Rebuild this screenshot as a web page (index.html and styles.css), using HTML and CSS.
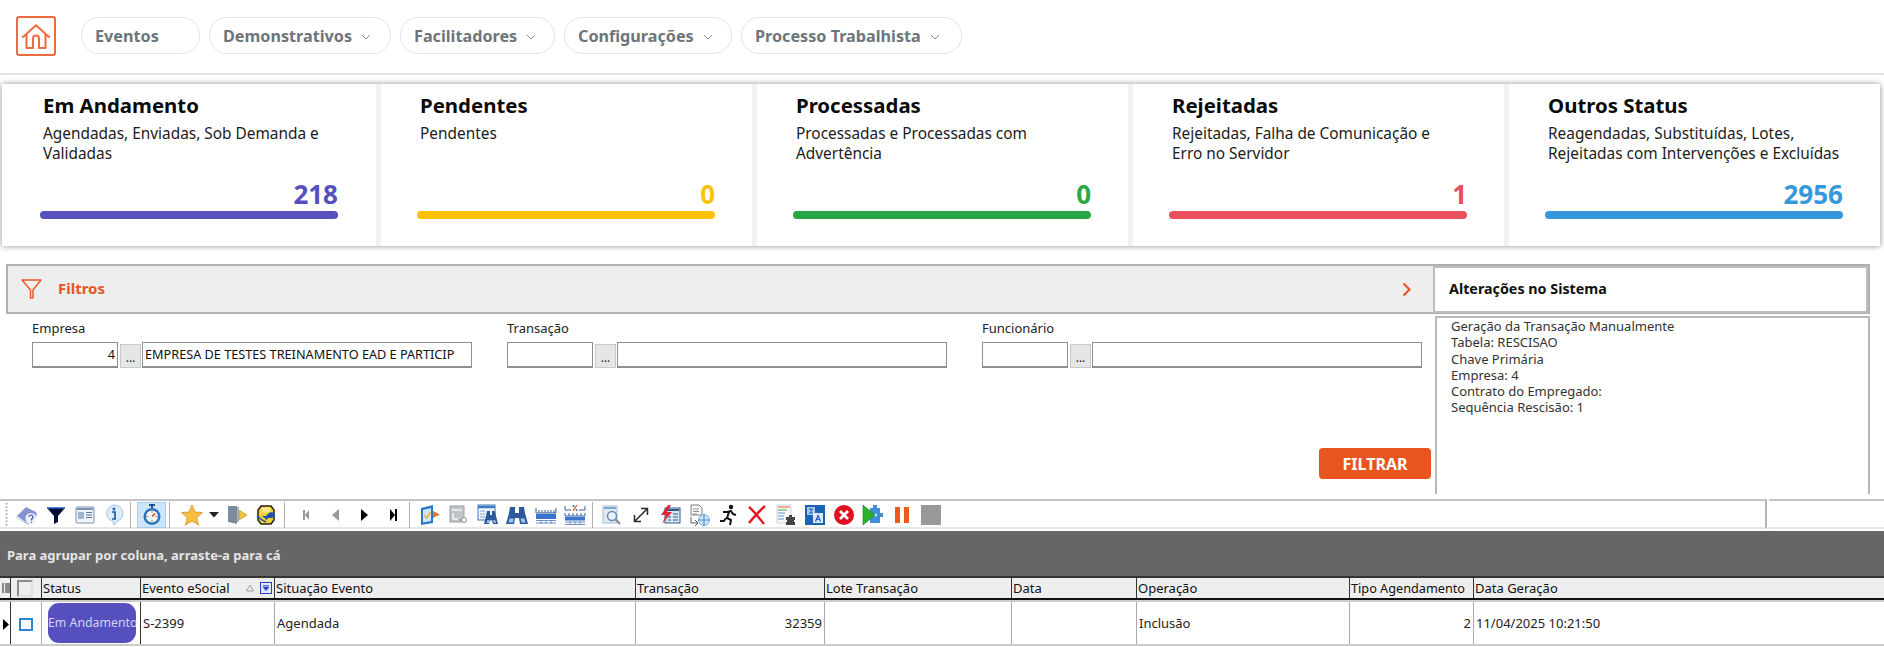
FILE: index.html
```html
<!DOCTYPE html>
<html lang="pt-BR">
<head>
<meta charset="utf-8">
<title>Painel eSocial</title>
<link rel="stylesheet" href="styles.css">
</head>
<body>
<header class="topbar">
  <a class="home"><svg viewBox="0 0 28 25" width="28" height="25"><path d="M1 13 14 1.2 27 13M4.5 10.5V24H11V14.5a3 3 0 0 1 6 0V24h6.5V10.5" fill="none" stroke="#ee6a3f" stroke-width="2" stroke-linejoin="round" stroke-linecap="round"/></svg></a>
  <nav class="menu">
    <span class="pill pill-eventos">Eventos</span>
    <span class="pill pill-demo">Demonstrativos<svg class="caret" viewBox="0 0 10 6"><path d="M1 1l4 4 4-4" fill="none" stroke="#8a8f96" stroke-width="1"/></svg></span>
    <span class="pill pill-fac">Facilitadores<svg class="caret" viewBox="0 0 10 6"><path d="M1 1l4 4 4-4" fill="none" stroke="#8a8f96" stroke-width="1"/></svg></span>
    <span class="pill pill-conf">Configurações<svg class="caret" viewBox="0 0 10 6"><path d="M1 1l4 4 4-4" fill="none" stroke="#8a8f96" stroke-width="1"/></svg></span>
    <span class="pill pill-proc">Processo Trabalhista<svg class="caret" viewBox="0 0 10 6"><path d="M1 1l4 4 4-4" fill="none" stroke="#8a8f96" stroke-width="1"/></svg></span>
  </nav>
</header>

<section class="cards">
  <article class="card">
    <h2>Em Andamento</h2>
    <p>Agendadas, Enviadas, Sob Demanda e<br>Validadas</p>
    <div class="count c-purple">218</div>
    <div class="bar b-purple"></div>
  </article>
  <article class="card">
    <h2>Pendentes</h2>
    <p>Pendentes</p>
    <div class="count c-yellow">0</div>
    <div class="bar b-yellow"></div>
  </article>
  <article class="card">
    <h2>Processadas</h2>
    <p>Processadas e Processadas com<br>Advertência</p>
    <div class="count c-green">0</div>
    <div class="bar b-green"></div>
  </article>
  <article class="card">
    <h2>Rejeitadas</h2>
    <p>Rejeitadas, Falha de Comunicação e<br>Erro no Servidor</p>
    <div class="count c-red">1</div>
    <div class="bar b-red"></div>
  </article>
  <article class="card">
    <h2>Outros Status</h2>
    <p>Reagendadas, Substituídas, Lotes,<br>Rejeitadas com Intervenções e Excluídas</p>
    <div class="count c-blue">2956</div>
    <div class="bar b-blue"></div>
  </article>
</section>

<section class="filters">
  <div class="f-left">
    <div class="f-head">
      <svg class="f-icon" viewBox="0 0 21 20" width="21" height="20"><path d="M1 1h19L12 11v8H9.500V11z" fill="none" stroke="#ee5a28" stroke-width="1.500" stroke-linejoin="round"/></svg>
      <span class="f-title">Filtros</span>
      <svg class="f-chev" viewBox="0 0 9 15" width="9" height="15"><path d="M1.500 1.500 7.500 7.500 1.500 13.500" fill="none" stroke="#e8551e" stroke-width="2.200"/></svg>
    </div>
    <div class="f-form">
      <div class="field">
        <label>Empresa</label>
        <div class="inputs"><span class="inp num">4</span><span class="dots">...</span><span class="inp wide">EMPRESA DE TESTES TREINAMENTO EAD E PARTICIP</span></div>
      </div>
      <div class="field">
        <label>Transação</label>
        <div class="inputs"><span class="inp num"></span><span class="dots">...</span><span class="inp wide"></span></div>
      </div>
      <div class="field">
        <label>Funcionário</label>
        <div class="inputs"><span class="inp num"></span><span class="dots">...</span><span class="inp wide"></span></div>
      </div>
    </div>
    <div class="f-actions"><button class="btn-filter">FILTRAR</button></div>
  </div>
  <aside class="f-right">
    <div class="alt-head"><div class="alt-title">Alterações no Sistema</div></div>
    <div class="alt-body">Geração da Transação Manualmente<br>Tabela: RESCISAO<br>Chave Primária<br>Empresa: 4<br>Contrato do Empregado:<br>Sequência Rescisão: 1</div>
  </aside>
</section>

<section class="toolbar-row">
  <div class="toolbar">
    <svg class="grip" viewBox="0 0 3 25" width="3" height="25"><path d="M1.500 1v23" stroke="#aaa" stroke-width="2" stroke-dasharray="1.500 2"/></svg>
    <span class="tb"><svg viewBox="0 0 22 22"><path d="M1 12 10 3l10 5c1 2 1 5-1 7l-7 5z" fill="#8494d2"/><path d="M1 12v2l11 6.500 7-4" fill="none" stroke="#c4cdea" stroke-width="1"/><circle cx="15" cy="14.500" r="5.500" fill="#eef1fb"/><path d="M13 13a2 2 0 1 1 2.500 2v1.500M15.500 18v1" fill="none" stroke="#4a60b0" stroke-width="1.300"/></svg></span>
    <span class="tb"><svg viewBox="0 0 22 22"><path d="M2 4h18l-7 8v6l-4 2v-8z" fill="#050a30"/><path d="M2 4h18" stroke="#1a57c0" stroke-width="1.500"/></svg></span>
    <span class="tb"><svg viewBox="0 0 22 22"><rect x="2" y="3" width="18" height="16" rx="1" fill="#eef3f8" stroke="#7a92b4"/><path d="M3 5h16" stroke="#7a92b4" stroke-width="2"/><path d="M4 8h6v7H4z" fill="#9fb4cf"/><path d="M12 8.500h6M12 11h6M12 13.500h6" stroke="#5b7a9f"/></svg></span>
    <span class="tb"><svg viewBox="0 0 22 22"><path d="M11 1a9 8.500 0 0 1 3 16.500L11 21l-1-3.500A9 8.500 0 0 1 11 1z" fill="#dcebf9" stroke="#a9c4e0"/><circle cx="11" cy="5" r="1.500" fill="#1e5fa8"/><path d="M9 8h3v7h1M9 15h4" stroke="#1e5fa8" stroke-width="1.700" fill="none"/></svg></span>
    <span class="sep s1"></span>
    <span class="tb tb-on"><svg viewBox="0 0 22 22"><path d="M8 1h6M11 1v3" stroke="#1c4f8f" stroke-width="2"/><circle cx="11" cy="12.500" r="8.500" fill="#2a74c0"/><circle cx="11" cy="12.500" r="6" fill="#f3f6f8"/><path d="M11 7v2M11 16v2M5.500 12.500h2M14.500 12.500h2" stroke="#e86a2a"/><path d="M11 12.500l3-3" stroke="#d13a1a" stroke-width="1.500"/></svg></span>
    <span class="sep s2"></span>
    <span class="tb"><svg viewBox="0 0 22 22"><path d="M11 1l3 7 7.500.6-5.700 5 1.800 7.400L11 17l-6.600 4 1.800-7.400-5.700-5L8 8z" fill="#f9bf3e" stroke="#d9902a" stroke-width=".8"/></svg></span>
    <span class="tb tb-narrow"><svg viewBox="0 0 10 6" class="tb-arrow"><path d="M0 0h10L5 5.500z" fill="#222"/></svg></span>
    <span class="tb"><svg viewBox="0 0 22 22"><path d="M2 2h9v18l-9-2z" fill="#7d8c9b"/><path d="M11 3h2v15h-2z" fill="#a8b4bf"/><path d="M13 6l8 5-8 5z" fill="#efc23a" stroke="#b0902a" stroke-width=".6"/></svg></span>
    <span class="tb"><svg viewBox="0 0 22 22"><path d="M6 2h10l3 4v10l-3 4H6l-3-4V6z" fill="#f3cf2f" stroke="#222" stroke-width="1.500"/><path d="M7 3.500h8v5H7z" fill="#f7e88f"/><path d="M20 9c-3-1-6-1-7 1l-2 2H7l5 4 1-2c2 0 5 0 7-1z" fill="#2050b0"/><path d="M2 12c3 3 6 5 9 6" stroke="#2050b0" stroke-width="1.500" fill="none"/></svg></span>
    <span class="sep s3"></span>
    <span class="tb"><svg viewBox="0 0 22 22"><path d="M8 6v10h2V6zM10 11l4-5v10z" fill="#9a9a9a"/></svg></span>
    <span class="tb"><svg viewBox="0 0 22 22"><path d="M15 5v12l-7-6z" fill="#9a9a9a"/></svg></span>
    <span class="tb"><svg viewBox="0 0 22 22"><path d="M8 5v12l7-6z" fill="#000"/></svg></span>
    <span class="tb"><svg viewBox="0 0 22 22"><path d="M8 5v12l5-6zM13 5h2v12h-2z" fill="#000"/></svg></span>
    <span class="sep s4"></span>
    <span class="tb"><svg viewBox="0 0 22 22"><path d="M2 4 14 1v18l-12 2z" fill="#2b7bc4"/><path d="M4 6l8-2v13l-8 1.500z" fill="#cfe6f7"/><path d="M5.500 11l2 3 4-6" stroke="#e7b531" stroke-width="1.500" fill="none"/><path d="M14 7l7 3.500-7 3.500z" fill="#e8732c"/></svg></span>
    <span class="tb"><svg viewBox="0 0 22 22"><rect x="2" y="2" width="14" height="16" fill="#bfc4c8" stroke="#9aa0a5"/><path d="M4 6h10" stroke="#f3f3f3" stroke-width="1.500"/><path d="M5 9v6h5" stroke="#f3f3f3" stroke-width="1.500" fill="none"/><circle cx="16" cy="16" r="2.500" fill="#fff" stroke="#8a9095"/><path d="M11 16h3" stroke="#8a9095"/></svg></span>
    <span class="tb"><svg viewBox="0 0 22 22"><rect x="1" y="1" width="17" height="15" fill="#f1f5fa" stroke="#3c79bd"/><path d="M1 3h17" stroke="#3c79bd" stroke-width="2.500"/><path d="M3 7h5M3 10h5M3 13h5" stroke="#8ca5c4"/><path d="M10 7h3v4h2V7h3l1 5 2 8h-5l-1-4h-2l-1 4H7l2-8z" fill="#2a5a9c"/><path d="M10.500 16h2l-.5 3H9.500zM16 16h2l1 3h-2z" fill="#a9c3e8"/></svg></span>
    <span class="tb"><svg viewBox="0 0 22 22"><path d="M4 3h5v6h4V3h5l1 6 3 11h-8l-1-6h-4l-1 6H0l3-11z" fill="#2a5a9c"/><path d="M3.500 14.500h4l-.5 4H2.500zM14.500 14.500h4l1 4h-4z" fill="#a9c3e8"/></svg></span>
    <span class="tb"><svg viewBox="0 0 22 22"><path d="M1 4v5h20V4M4 6v3M7 6v3M10 6v3M13 6v3M16 6v3M19 6v3" fill="none" stroke="#3a5f96"/><rect x="1" y="10" width="20" height="5" fill="#3a72cf"/><path d="M1 16.500h20M1 19h20M6 16v4M11 16v4M16 16v4" stroke="#6c8fc8"/></svg></span>
    <span class="tb"><svg viewBox="0 0 22 22"><path d="M1 2v4h6M21 2v4h-6" fill="none" stroke="#3a5f96"/><path d="M13 1 9 7" stroke="#e05a22" stroke-width="1.300"/><circle cx="9.500" cy="2" r="1" fill="#3a5f96"/><circle cx="12.500" cy="6" r="1" fill="#3a5f96"/><path d="M1 9v3h20V9M5 9v3M9 9v3M13 9v3M17 9v3" fill="none" stroke="#3a5f96"/><rect x="1" y="13" width="20" height="3.500" fill="#3a72cf"/><path d="M1 18h20M1 20.500h20M6 17v4M11 17v4M16 17v4" stroke="#6c8fc8"/></svg></span>
    <span class="sep s5"></span>
    <span class="tb"><svg viewBox="0 0 22 22"><path d="M2 2h14v17H2z" fill="#dfe8f3" stroke="#a8bdd6"/><path d="M3 4h12" stroke="#7ea5d2" stroke-width="2"/><circle cx="11" cy="12" r="4.500" fill="#eaf3fb" stroke="#6d8db2" stroke-width="1.500"/><path d="M14.500 15.500l4.500 4.500" stroke="#7d868f" stroke-width="2"/></svg></span>
    <span class="tb"><svg viewBox="0 0 22 22"><path d="M5 17 17 5M11 4.500h6.500V11M4.500 11v6.500H11" fill="none" stroke="#2a2a2a" stroke-width="1.500"/></svg></span>
    <span class="tb"><svg viewBox="0 0 22 22"><rect x="6" y="4" width="15" height="15" fill="#dbe5f0" stroke="#2f5a8f"/><path d="M7 6h13" stroke="#2f5a8f" stroke-width="2"/><path d="M14 10h5M14 13h5M14 16h5M9 13h3M9 16h3" stroke="#2f5a8f"/><path d="M9 1 2 11h5l-4 9 10-12H8l4-7z" fill="#e0263a"/></svg></span>
    <span class="tb"><svg viewBox="0 0 22 22"><path d="M3 1h8l3 3v7H3z" fill="#fbfbfb" stroke="#7c7c7c"/><path d="M5 5h6M5 7.500h6M5 10h4" stroke="#8d8d8d"/><path d="M3 13v6h6M7 16l3 3-3 3" stroke="#5c5c5c" fill="none"/><circle cx="16" cy="16" r="5.500" fill="#cfe3f7" stroke="#7fb1e2"/><path d="M16 10v12M10 16h12" stroke="#4e92d6" stroke-width="1.200"/></svg></span>
    <span class="tb"><svg viewBox="0 0 22 22"><circle cx="14" cy="3" r="2.200" fill="#111"/><path d="M6 8h4l4-1 2 3 3 1M12 8l-2 6 4 2-1 5M9 14l-2 3H3" fill="none" stroke="#111" stroke-width="2" stroke-linejoin="round"/></svg></span>
    <span class="tb"><svg viewBox="0 0 22 22"><path d="M3 3c5 4 10 11 15 17M19 2C13 7 8 13 3 19" fill="none" stroke="#e8141c" stroke-width="2.400"/></svg></span>
    <span class="tb"><svg viewBox="0 0 22 22"><rect x="2" y="1" width="14" height="18" fill="#f6f9fc" stroke="#c9d6e3"/><path d="M3 3h12" stroke="#e89070" stroke-width="1.500"/><path d="M3 6h9" stroke="#7cc07c" stroke-width="1.500"/><path d="M3 9h7M3 12h6M3 15h6" stroke="#8fb4da" stroke-width="1.500"/><path d="M11 13h3v-2h3v2h3v3h-1v2h1v3h-9v-3h1v-2h-1z" fill="#444"/></svg></span>
    <span class="tb"><svg viewBox="0 0 22 22"><rect x="1" y="1" width="20" height="20" fill="#1d63b5"/><path d="M3 3h8v8H3z" fill="#a9c8ea"/><rect x="9" y="9" width="10" height="10" fill="#dbe9f7"/><path d="M5 5h4M7 5v4M5 9h4" stroke="#1d63b5"/><path d="M11.500 17.500l2.500-6 2.500 6M12.500 15.500h3" fill="none" stroke="#1d63b5" stroke-width="1.200"/></svg></span>
    <span class="tb"><svg viewBox="0 0 22 22"><circle cx="11" cy="11" r="10" fill="#e10f1f"/><path d="M7 7l8 8M15 7l-8 8" stroke="#fff" stroke-width="2.800"/></svg></span>
    <span class="tb"><svg viewBox="0 0 22 22"><path d="M8 4h3V1h4v3h3v5h3v4h-3v6H8z" fill="#3f8fd8"/><circle cx="13.500" cy="11" r="1.500" fill="#d9ecfb"/><path d="M1 1l12 10L1 21z" fill="#2fb02f" stroke="#1c7a1c" stroke-width=".6"/></svg></span>
    <span class="tb"><svg viewBox="0 0 22 22"><path d="M4 3h5v16H4zM13 3h5v16h-5z" fill="#ee5a1c"/></svg></span>
    <span class="tb"><svg viewBox="0 0 22 22"><rect x="1" y="1" width="20" height="20" fill="#999"/></svg></span>
  </div>
  <div class="tool-side"></div>
</section>

<div class="group-bar">Para agrupar por coluna, arraste-a para cá</div>

<div class="grid">
  <div class="g-head">
    <div class="gc gc-ind"><svg viewBox="0 0 8 10" width="8" height="10"><path d="M0 1h2M0 3h2M0 5h2M0 7h2M0 9h2M3 1h5M3 3h5M3 5h5M3 7h5M3 9h5" stroke="#222" stroke-width="1"/></svg></div>
    <div class="gc gc-chk"><span class="hchk"></span></div>
    <div class="gc">Status</div>
    <div class="gc gc-ev"><span>Evento eSocial</span>
      <svg class="sort" viewBox="0 0 8 8" width="8" height="8"><path d="M4 1 7.500 7H.5z" fill="none" stroke="#a0a0a0"/></svg>
      <svg class="hfilter" viewBox="0 0 12 12" width="12" height="12"><rect x=".5" y=".5" width="11" height="11" fill="#dfe9fa" stroke="#2a3fc0"/><path d="M3 3.500h6M3 5h6L6 8.500z" fill="#2a3fc0" stroke="#2a3fc0" stroke-width=".7"/></svg>
    </div>
    <div class="gc">Situação Evento</div>
    <div class="gc">Transação</div>
    <div class="gc">Lote Transação</div>
    <div class="gc">Data</div>
    <div class="gc">Operação</div>
    <div class="gc gc-tipo">Tipo Agendamento</div>
    <div class="gc">Data Geração</div>
  </div>
  <div class="g-row">
    <div class="rc rc-ind"><svg viewBox="0 0 6 11" width="6" height="11"><path d="M0 0l6 5.500L0 11z" fill="#000"/></svg></div>
    <div class="rc rc-chk"><span class="rchk"></span></div>
    <div class="rc rc-status"><span class="badge">Em Andamento</span></div>
    <div class="rc">S-2399</div>
    <div class="rc">Agendada</div>
    <div class="rc rc-num">32359</div>
    <div class="rc"></div>
    <div class="rc"></div>
    <div class="rc">Inclusão</div>
    <div class="rc rc-num">2</div>
    <div class="rc">11/04/2025 10:21:50</div>
  </div>
</div>
</body>
</html>
```
FILE: styles.css
```css
* { box-sizing: border-box; }
html, body { margin: 0; padding: 0; }
body {
  width: 1884px;
  height: 647px;
  overflow: hidden;
  background: #fff;
  color: #222;
  font-family: "Noto Sans", "Liberation Sans", sans-serif;
  font-size: 13px;
}

.topbar {
  height: 75px;
  display: flex;
  align-items: flex-start;
  padding: 16px 0 0 16px;
  border-bottom: 2px solid #e3e3e3;
}
.home {
  width: 40px;
  height: 40px;
  border: 2px solid #ee6a3f;
  border-radius: 3px;
  display: flex;
  align-items: center;
  justify-content: center;
}
.menu { display: flex; gap: 9px; margin: 1px 0 0 25px; }
.pill {
  height: 37px;
  display: flex;
  align-items: center;
  padding-left: 13px;
  border: 1px solid #e2e4e6;
  border-radius: 18px;
  color: #6c757d;
  font-weight: 700;
  font-size: 16.200px;
  white-space: nowrap;
}
.pill-eventos { width: 119px; }
.pill-demo { width: 182px; }
.pill-fac { width: 155px; }
.pill-conf { width: 168px; }
.pill-proc { width: 221px; }
.caret { width: 10px; height: 6px; margin-left: 9px; margin-top: 2px; flex: none; }

.cards {
  display: grid;
  grid-template-columns: 374px repeat(4, 371px);
  gap: 5px;
  margin: 9px 4px 0 2px;
  height: 162px;
  background: #f1f1f1;
  box-shadow: 0 0 6px rgba(0,0,0,.45);
}
.card { background: #fff; padding: 7px 37px 0 39px; display: flex; flex-direction: column; }
.card:first-child { padding: 7px 38px 0 41px; }
.card h2 { margin: 0; font-size: 20.400px; line-height: 28px; font-weight: 700; color: #0b0b0b; }
.card p { margin: 5px 0 0; font-size: 15.400px; line-height: 20px; height: 40px; color: #1b1b1b; white-space: nowrap; }
.count { margin-top: 15px; text-align: right; font-size: 26px; line-height: 30px; font-weight: 700; }
.bar { height: 8px; border-radius: 4px; margin: 2px 0 0 -3px; }
.c-purple { color: #5650bf; } .b-purple { background: #5650bf; }
.c-yellow { color: #ffc107; } .b-yellow { background: #ffc107; }
.c-green { color: #28a745; } .b-green { background: #28a745; }
.c-red { color: #e9505c; } .b-red { background: #e9505c; }
.c-blue { color: #3498db; } .b-blue { background: #3498db; }

.filters {
  display: grid;
  grid-template-columns: 1427px 437px;
  margin: 18px 14px 0 6px;
  height: 235px;
}
.f-left { display: flex; flex-direction: column; }
.f-head {
  height: 50px;
  background: #eee;
  border: 2px solid #b0b0b0;
  border-right: 0;
  display: flex;
  align-items: center;
  padding-left: 13px;
}
.f-title { margin-left: 16px; color: #e8551e; font-weight: 700; font-size: 15px; line-height: 20px; margin-bottom: 2px; }
.f-chev { margin-left: auto; margin-right: 22px; }
.f-form { display: flex; gap: 35px; padding: 5px 0 0 26px; }
.field { width: 440px; }
.field label { display: block; height: 23px; line-height: 18px; font-size: 13px; color: #222; }
.inputs { display: flex; align-items: stretch; height: 26px; }
.inp {
  border: 1px solid #8f8f8f;
  border-bottom-width: 2px;
  background: #fff;
  line-height: 23px;
  font-size: 12.700px;
  color: #111;
  white-space: nowrap;
  overflow: hidden;
}
.num { width: 86px; text-align: right; padding-right: 2px; }
.wide { width: 330px; padding-left: 2px; }
.dots {
  width: 21px;
  margin: 2px 1px 0 2px;
  background: #e6e6e6;
  border: 1px solid #c9c9c9;
  text-align: center;
  line-height: 26px;
  font-size: 12px;
}
.f-actions { display: flex; justify-content: flex-end; padding: 80px 2px 0 0; }
.btn-filter {
  width: 112px;
  height: 31px;
  border: 0;
  border-radius: 4px;
  background: #e8551e;
  color: #fff;
  font-family: "Noto Sans", "Liberation Sans", sans-serif;
  font-weight: 700;
  font-size: 16px;
}

.f-right { display: flex; flex-direction: column; }
.alt-head {
  height: 50px;
  background: #eee;
  border: 2px solid #b0b0b0;
  border-left: 0;
  padding: 0 0 1px 0;
}
.alt-title {
  height: 47px;
  background: #fff;
  border: 2px solid #bdbdbd;
  padding-left: 14px;
  line-height: 41px;
  font-weight: 700;
  font-size: 14.300px;
  color: #111;
}
.alt-body {
  height: 178px;
  margin: 2px 0 0 2px;
  border: 2px solid #b8b8b8;
  border-bottom: 0;
  padding: 0 0 0 14px;
  font-size: 13px;
  line-height: 16.300px;
  color: #333;
}

.toolbar-row { display: flex; height: 30px; margin-top: 0; }
.toolbar {
  width: 1767px;
  display: flex;
  align-items: center;
  padding: 1px 0 0 5px;
  border-top: 2px solid #c4c4c4;
  border-bottom: 2px solid #e6e6e6;
  border-right: 2px solid #b5b5b5;
}
.grip { margin-right: 4px; }
.tool-side { flex: 1; margin-left: 2px; border-top: 2px solid #c4c4c4; border-bottom: 2px solid #e6e6e6; }
.tb { width: 29px; height: 26px; flex: none; display: flex; align-items: center; justify-content: center; }
.tb svg { width: 22px; height: 22px; }
.tb-narrow { width: 16px; }
.tb .tb-arrow { width: 10px; height: 6px; }
.tb-on { background: #cfe4f7; border: 1px solid #a4cdf0; }
.sep { width: 1px; height: 26px; background: #b0b0b0; flex: none; }
.s1 { margin: 0 6px 0 2px; }
.s2 { margin: 0 7px 0 3px; }
.s3 { margin: 0 6px 0 4px; }
.s4 { margin: 0 5px 0 2px; }
.s5 { margin: 0 4px 0 3px; }

.group-bar {
  margin-top: 2px;
  height: 45px;
  background: #666;
  color: #e4e4e4;
  font-weight: 700;
  font-size: 13px;
  line-height: 48px;
  padding-left: 7px;
}

.g-head, .g-row {
  display: grid;
  grid-template-columns: 11px 31px 99px 134px 361px 189px 187px 125px 213px 124px 410px;
}
.g-head { height: 24px; background: #eee; border-top: 2px solid #333; border-bottom: 2px solid #111; }
.gc {
  border-right: 1px solid #333;
  padding-left: 1px;
  line-height: 21px;
  font-size: 13px;
  color: #111;
  white-space: nowrap;
  overflow: hidden;
}
.gc:last-child { border-right: 0; }
.gc-tipo { font-size: 12.700px; }
.gc-ind { padding: 5px 0 0 2px; line-height: 0; }
.gc-chk { padding: 2px 0 0 6px; line-height: 0; }
.hchk { display: block; width: 16px; height: 17px; background: #eee; border: 2px solid #8c8c8c; border-right-color: #e0e0e0; border-bottom-color: #e0e0e0; }
.gc-ev { display: flex; align-items: center; }
.sort { margin-left: 16px; }
.hfilter { margin-left: 6px; }
.g-row { height: 46px; border-top: 2px solid #ccc; border-bottom: 2px solid #ccc; }
.rc {
  border-right: 1px solid #aaa;
  padding: 0 2px;
  line-height: 42px;
  font-size: 13px;
  color: #222;
  white-space: nowrap;
  overflow: hidden;
}
.rc:last-child { border-right: 0; }
.rc-ind { padding: 17px 0 0 3px; line-height: 0; border-right-color: #333; }
.rc-chk { padding: 16px 0 0 8px; line-height: 0; }
.rchk { display: block; width: 14px; height: 13px; border: 2px solid #2b86d6; background: #fff; }
.rc-status { padding: 1px 4px 0 6px; line-height: 0; border-right-color: #333; }
.badge {
  display: block;
  height: 40px;
  overflow: hidden;
  border-radius: 11px;
  background: #5650bf;
  color: #d4d2f2;
  text-align: center;
  line-height: 40px;
  font-size: 12.300px;
  white-space: nowrap;
}
.rc-num { text-align: right; }
```
